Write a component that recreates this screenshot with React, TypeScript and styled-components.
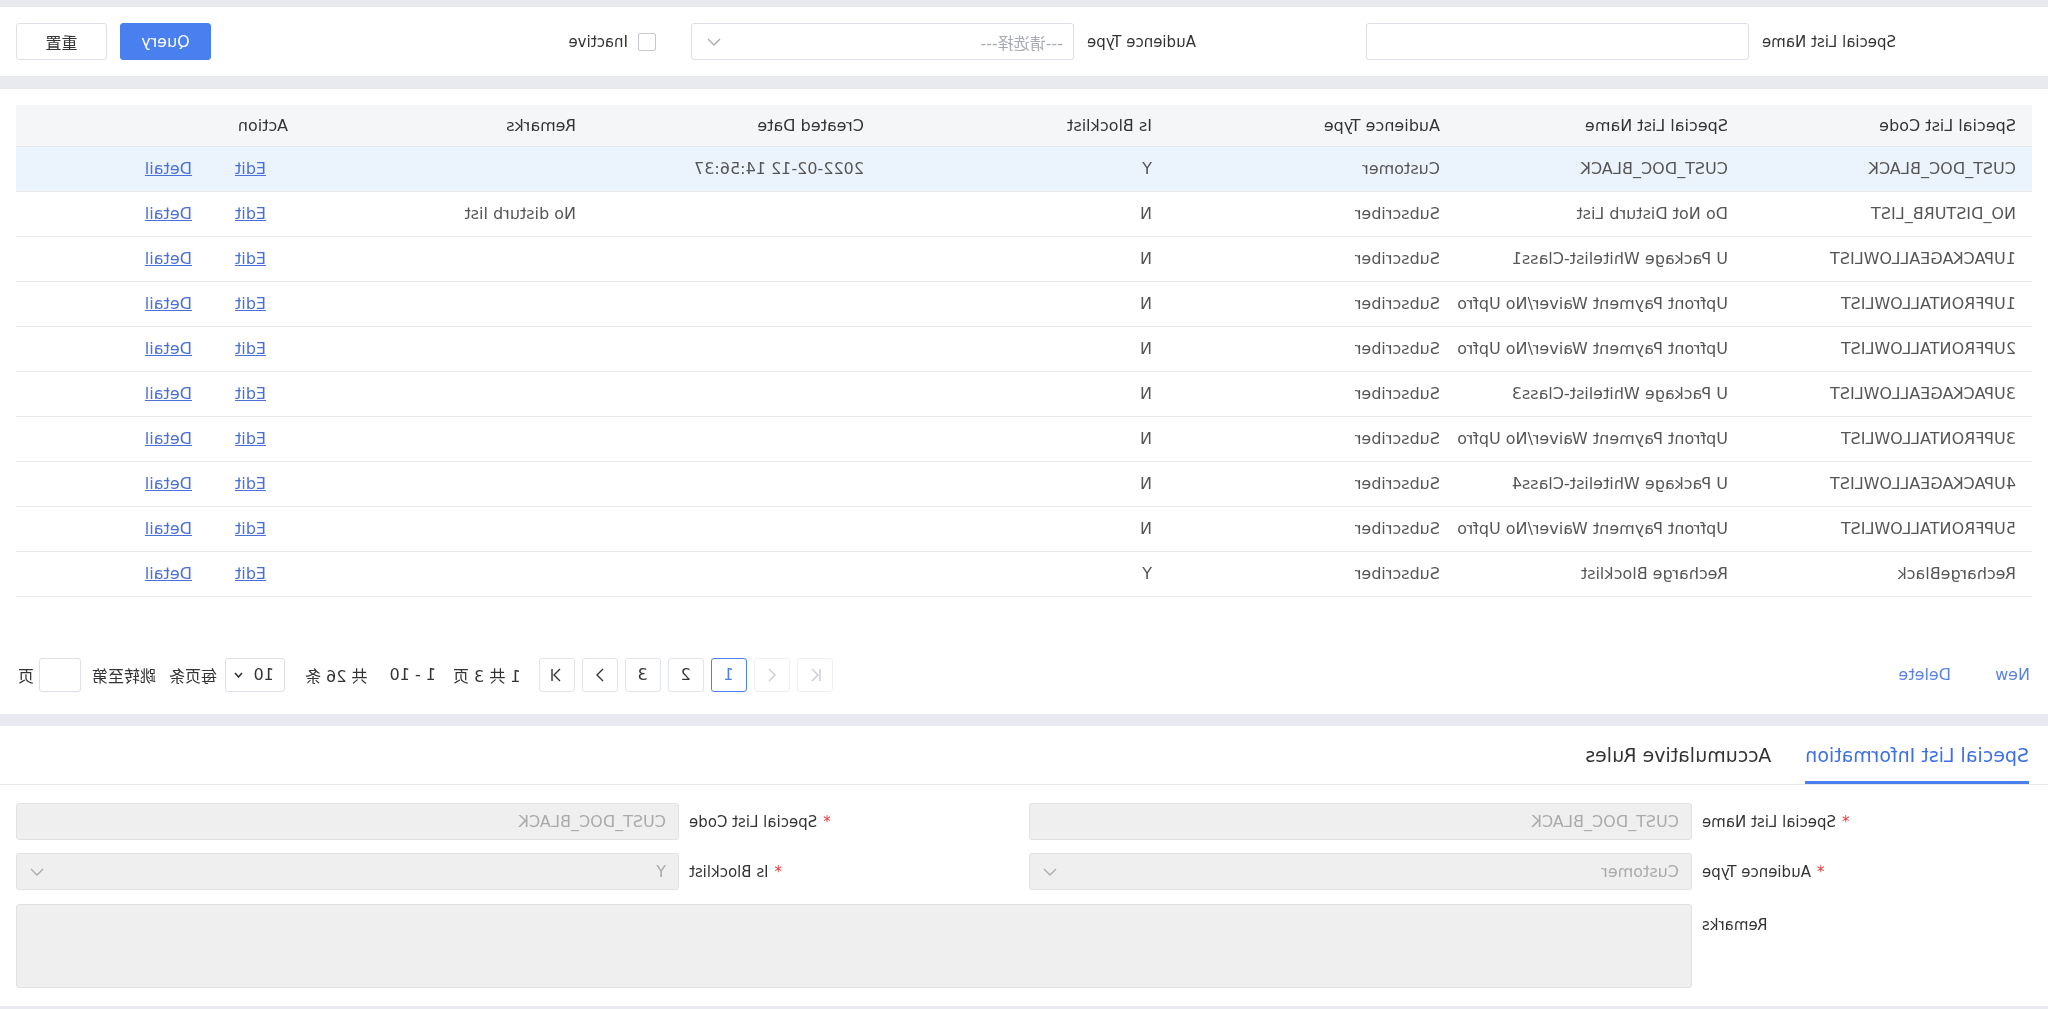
import styled, { createGlobalStyle } from 'styled-components'

const FONT = '"DejaVu Sans", "Noto Sans CJK SC", sans-serif'

const GlobalStyle = createGlobalStyle`
  html, body {
    margin: 0;
    padding: 0;
    background: #e9eaef;
  }
  body {
    font-family: ${FONT};
    font-size: 16px;
    color: #333;
  }
  * {
    box-sizing: border-box;
  }
`

interface ListRow {
  code: string
  name: string
  audience: string
  blocklist: string
  created: string
  remarks: string
}

const UPFRONT = 'Upfront Payment Waiver/No Upfront Payment'

const rows: ListRow[] = [
  { code: 'CUST_DOC_BLACK', name: 'CUST_DOC_BLACK', audience: 'Customer', blocklist: 'Y', created: '2022-02-12 14:56:37', remarks: '' },
  { code: 'NO_DISTURB_LIST', name: 'Do Not Disturb List', audience: 'Subscriber', blocklist: 'N', created: '', remarks: 'No disturb list' },
  { code: '1UPACKAGEALLOWLIST', name: 'U Package Whitelist-Class1', audience: 'Subscriber', blocklist: 'N', created: '', remarks: '' },
  { code: '1UPFRONTALLOWLIST', name: UPFRONT, audience: 'Subscriber', blocklist: 'N', created: '', remarks: '' },
  { code: '2UPFRONTALLOWLIST', name: UPFRONT, audience: 'Subscriber', blocklist: 'N', created: '', remarks: '' },
  { code: '3UPACKAGEALLOWLIST', name: 'U Package Whitelist-Class3', audience: 'Subscriber', blocklist: 'N', created: '', remarks: '' },
  { code: '3UPFRONTALLOWLIST', name: UPFRONT, audience: 'Subscriber', blocklist: 'N', created: '', remarks: '' },
  { code: '4UPACKAGEALLOWLIST', name: 'U Package Whitelist-Class4', audience: 'Subscriber', blocklist: 'N', created: '', remarks: '' },
  { code: '5UPFRONTALLOWLIST', name: UPFRONT, audience: 'Subscriber', blocklist: 'N', created: '', remarks: '' },
  { code: 'RechargeBlack', name: 'Recharge Blocklist', audience: 'Subscriber', blocklist: 'Y', created: '', remarks: '' },
]

function Chevron({ color = '#a8abb2' }: { color?: string }) {
  return (
    <svg width="14" height="8" viewBox="0 0 14 8">
      <polyline points="1,1 7,7 13,1" fill="none" stroke={color} strokeWidth="1.3" />
    </svg>
  )
}

function PagerIcon({ kind }: { kind: 'first' | 'prev' | 'next' | 'last' }) {
  const left = kind === 'first' || kind === 'prev'
  const bar = kind === 'first' || kind === 'last'
  return (
    <svg width="14" height="16" viewBox="0 0 14 16">
      <polyline
        points={left ? '10,2 4,8 10,14' : '4,2 10,8 4,14'}
        fill="none"
        stroke="currentColor"
        strokeWidth="1.4"
      />
      {bar && (
        <line
          x1={left ? 2 : 12}
          y1="2"
          x2={left ? 2 : 12}
          y2="14"
          stroke="currentColor"
          strokeWidth="1.4"
        />
      )}
    </svg>
  )
}

export default function App() {
  return (
    <>
      <GlobalStyle />
      <Screen>
        <FilterPanel>
          <FilterItem>
            <FilterLabel>Special List Name</FilterLabel>
            <TextBox />
          </FilterItem>
          <FilterItem>
            <FilterLabel>Audience Type</FilterLabel>
            <SelectBox>
              <span>---请选择---</span>
              <Chevron />
            </SelectBox>
          </FilterItem>
          <CheckItem>
            <CheckBox />
            <span>Inactive</span>
          </CheckItem>
          <ButtonGroup>
            <Button $primary>Query</Button>
            <Button>重置</Button>
          </ButtonGroup>
        </FilterPanel>

        <TablePanel>
          <TableArea>
            <Table>
              <thead>
                <tr>
                  <th>Special List Code</th>
                  <th>Special List Name</th>
                  <th>Audience Type</th>
                  <th>Is Blocklist</th>
                  <th>Created Date</th>
                  <th>Remarks</th>
                  <th>Action</th>
                </tr>
              </thead>
              <tbody>
                {rows.map((r, i) => (
                  <Row key={r.code} $selected={i === 0}>
                    <td>{r.code}</td>
                    <td>{r.name}</td>
                    <td>{r.audience}</td>
                    <td>{r.blocklist}</td>
                    <td>{r.created}</td>
                    <td>{r.remarks}</td>
                    <td>
                      <ActionLinks>
                        <a href="#">Edit</a>
                        <a href="#">Detail</a>
                      </ActionLinks>
                    </td>
                  </Row>
                ))}
              </tbody>
            </Table>
          </TableArea>

          <Footer>
            <TextActions>
              <TextButton>New</TextButton>
              <TextButton>Delete</TextButton>
            </TextActions>
            <Pager>
              <PageButton $disabled>
                <PagerIcon kind="first" />
              </PageButton>
              <PageButton $disabled>
                <PagerIcon kind="prev" />
              </PageButton>
              <PageButton $active>1</PageButton>
              <PageButton>2</PageButton>
              <PageButton>3</PageButton>
              <PageButton>
                <PagerIcon kind="next" />
              </PageButton>
              <PageButton>
                <PagerIcon kind="last" />
              </PageButton>
              <PagerText $gap={11}>1 共 3 页</PagerText>
              <PagerText $gap={17}>1 - 10</PagerText>
              <PagerText $gap={22}>共 26 条</PagerText>
              <SizeSelect>
                <span>10</span>
                <svg width="9" height="6" viewBox="0 0 9 6">
                  <polyline points="1,1 4.5,5 8,1" fill="none" stroke="#333" strokeWidth="1.6" />
                </svg>
              </SizeSelect>
              <PagerText $gap={8}>每页条</PagerText>
              <PagerText $gap={13}>跳转至第</PagerText>
              <JumpInput />
              <PagerText $gap={5}>页</PagerText>
            </Pager>
          </Footer>
        </TablePanel>

        <DetailPanel>
          <Tabs>
            <Tab $active>Special List Information</Tab>
            <Tab>Accumulative Rules</Tab>
          </Tabs>
          <DetailForm>
            <FormItem>
              <FormLabel>
                <Required>*</Required>Special List Name
              </FormLabel>
              <DisabledField>CUST_DOC_BLACK</DisabledField>
            </FormItem>
            <FormItem>
              <FormLabel>
                <Required>*</Required>Special List Code
              </FormLabel>
              <DisabledField>CUST_DOC_BLACK</DisabledField>
            </FormItem>
            <FormItem>
              <FormLabel>
                <Required>*</Required>Audience Type
              </FormLabel>
              <DisabledField>
                <span>Customer</span>
                <Chevron />
              </DisabledField>
            </FormItem>
            <FormItem>
              <FormLabel>
                <Required>*</Required>Is Blocklist
              </FormLabel>
              <DisabledField>
                <span>Y</span>
                <Chevron />
              </DisabledField>
            </FormItem>
            <FormItem $wide>
              <FormLabel $top>Remarks</FormLabel>
              <DisabledArea />
            </FormItem>
          </DetailForm>
        </DetailPanel>
      </Screen>
    </>
  )
}

const Screen = styled.div`
  display: flex;
  flex-direction: column;
  height: 1009px;
  overflow: hidden;
  padding-top: 7px;
  transform: scaleX(-1);
  width: 2048px;
`

const FilterPanel = styled.section`
  align-items: center;
  background: #fff;
  display: flex;
  flex-shrink: 0;
  height: 69px;
  padding: 0 16px;
`

const FilterItem = styled.div`
  align-items: center;
  display: flex;
  width: 675px;
`

const FilterLabel = styled.label`
  color: #333;
  font-size: 15px;
  padding-right: 13px;
  text-align: right;
  width: 283px;
`

const TextBox = styled.div`
  background: #fff;
  border: 1px solid #dcdfe6;
  border-radius: 3px;
  height: 37px;
  width: 383px;
`

const SelectBox = styled(TextBox)`
  align-items: center;
  color: #a8abb2;
  display: flex;
  font-size: 16px;
  justify-content: space-between;
  padding: 0 15px 0 10px;
`

const CheckItem = styled.label`
  align-items: center;
  color: #333;
  display: flex;
  font-size: 15px;
  gap: 10px;
  margin-left: 26px;
`

const CheckBox = styled.span`
  background: #fff;
  border: 1px solid #c6c9cf;
  border-radius: 2px;
  height: 18px;
  width: 18px;
`

const ButtonGroup = styled.div`
  display: flex;
  gap: 13px;
  margin-left: auto;
`

const Button = styled.button<{ $primary?: boolean }>`
  background: ${({ $primary }) => ($primary ? '#4a7ff0' : '#fff')};
  border: 1px solid ${({ $primary }) => ($primary ? '#4a7ff0' : '#dcdfe6')};
  border-radius: 3px;
  color: ${({ $primary }) => ($primary ? '#fff' : '#333')};
  font-family: ${FONT};
  font-size: 16px;
  height: 37px;
  width: 91px;
`

const TablePanel = styled.section`
  background: #fff;
  flex-shrink: 0;
  height: 625px;
  margin-top: 13px;
  padding: 16px 16px 0;
`

const TableArea = styled.div`
  height: 491px;
`

const Table = styled.table`
  border-collapse: collapse;
  font-family: ${FONT};
  font-size: 16px;
  table-layout: fixed;
  width: 100%;

  th {
    background: #f5f6f8;
    border-bottom: 1px solid #e4e6eb;
    color: #333;
    font-size: 16px;
    font-weight: normal;
    height: 41px;
    padding: 0 16px;
    text-align: left;
  }

  td {
    border-bottom: 1px solid #e8eaee;
    color: #555;
    font-size: 16px;
    height: 45px;
    overflow: hidden;
    padding: 0 16px;
    white-space: nowrap;
  }
`

const Row = styled.tr<{ $selected?: boolean }>`
  background: ${({ $selected }) => ($selected ? '#ebf4fd' : '#fff')};
`

const ActionLinks = styled.div`
  display: flex;
  gap: 43px;
  padding-left: 22px;

  a {
    color: #4a6fd8;
    text-decoration: underline;
  }
`

const Footer = styled.div`
  align-items: center;
  display: flex;
  height: 35px;
  justify-content: space-between;
  margin-top: 61px;
`

const TextActions = styled.div`
  display: flex;
  gap: 44px;
  padding-left: 2px;
`

const TextButton = styled.span`
  color: #5b82e6;
  font-size: 16px;
`

const Pager = styled.div`
  align-items: center;
  color: #333;
  display: flex;
  font-size: 16px;
  padding-right: 2px;
`

const PageButton = styled.span<{ $active?: boolean; $disabled?: boolean }>`
  align-items: center;
  border: 1px solid
    ${({ $active, $disabled }) => ($active ? '#4a7ff0' : $disabled ? '#eef0f3' : '#e1e4e9')};
  border-radius: 3px;
  color: ${({ $active, $disabled }) => ($active ? '#4a7ff0' : $disabled ? '#c8cbd0' : '#333')};
  display: flex;
  height: 34px;
  justify-content: center;
  margin-right: 7px;
  width: 36px;
`

const PagerText = styled.span<{ $gap: number }>`
  margin-left: ${({ $gap }) => $gap}px;
  white-space: nowrap;
`

const SizeSelect = styled.span`
  align-items: center;
  border: 1px solid #dcdfe6;
  border-radius: 3px;
  display: flex;
  height: 34px;
  justify-content: space-between;
  margin-left: 20px;
  padding: 0 8px 0 10px;
  width: 60px;
`

const JumpInput = styled.span`
  border: 1px solid #dcdfe6;
  border-radius: 3px;
  height: 34px;
  margin-left: 11px;
  width: 42px;
`

const DetailPanel = styled.section`
  background: #fff;
  flex-shrink: 0;
  height: 280px;
  margin-top: 12px;
`

const Tabs = styled.div`
  border-bottom: 1px solid #e8eaee;
  display: flex;
  gap: 34px;
  height: 59px;
  padding-left: 19px;
`

const Tab = styled.div<{ $active?: boolean }>`
  align-items: center;
  border-bottom: 3px solid ${({ $active }) => ($active ? '#4a7ff0' : 'transparent')};
  color: ${({ $active }) => ($active ? '#3d6fe6' : '#333')};
  display: flex;
  font-size: 19px;
  padding-top: 3px;
`

const DetailForm = styled.div`
  column-gap: 10px;
  display: grid;
  grid-template-columns: 1fr 1fr;
  padding: 18px 16px 0;
  row-gap: 13px;
`

const FormItem = styled.div<{ $wide?: boolean }>`
  align-items: ${({ $wide }) => ($wide ? 'flex-start' : 'center')};
  display: flex;
  grid-column: ${({ $wide }) => ($wide ? '1 / -1' : 'auto')};
  margin-top: ${({ $wide }) => ($wide ? '1px' : '0')};
`

const FormLabel = styled.label<{ $top?: boolean }>`
  color: #333;
  flex-shrink: 0;
  font-size: 15px;
  padding-right: 10px;
  padding-top: ${({ $top }) => ($top ? '12px' : '0')};
  text-align: right;
  width: 340px;
`

const Required = styled.span`
  color: #e5393a;
  margin-right: 6px;
`

const DisabledField = styled.div`
  align-items: center;
  background: #efefef;
  border: 1px solid #e2e2e2;
  border-radius: 3px;
  color: #aaa;
  display: flex;
  flex: 1;
  font-size: 16px;
  height: 37px;
  justify-content: space-between;
  padding: 0 13px 0 12px;
`

const DisabledArea = styled.div`
  background: #efefef;
  border: 1px solid #e2e2e2;
  border-radius: 3px;
  flex: 1;
  height: 84px;
`
